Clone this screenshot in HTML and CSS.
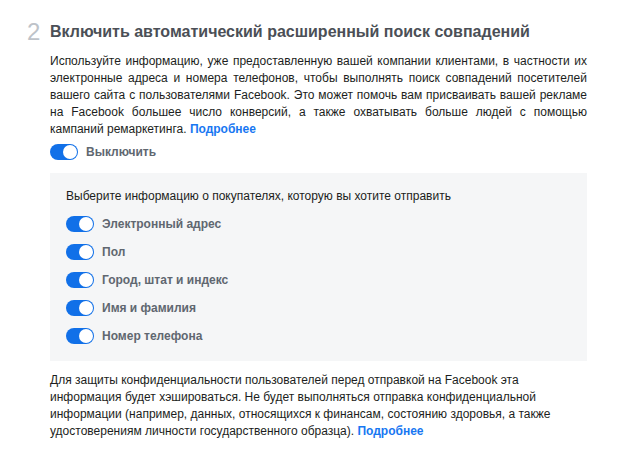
FILE: index.html
```html
<html>
<head>
<link rel="stylesheet" href="styles.css">
</head>
<body>
<div class="step">
  <div class="step-head">
    <span class="step-num">2</span>
    <h2 class="step-title">Включить автоматический расширенный поиск совпадений</h2>
  </div>

  <div class="step-body">
    <p class="intro">Используйте информацию, уже предоставленную вашей компании клиентами, в частности их электронные адреса и номера телефонов, чтобы выполнять поиск совпадений посетителей вашего сайта с пользователями Facebook. Это может помочь вам присваивать вашей рекламе на Facebook большее число конверсий, а также охватывать больше людей с помощью кампаний ремаркетинга. <a class="more" href="#">Подробнее</a></p>

    <div class="switch-row main-switch">
      <span class="toggle"><span class="knob"></span></span>
      <span class="switch-label">Выключить</span>
    </div>

    <div class="options">
      <div class="options-title">Выберите информацию о покупателях, которую вы хотите отправить</div>
      <div class="switch-row">
        <span class="toggle"><span class="knob"></span></span>
        <span class="switch-label">Электронный адрес</span>
      </div>
      <div class="switch-row">
        <span class="toggle"><span class="knob"></span></span>
        <span class="switch-label">Пол</span>
      </div>
      <div class="switch-row">
        <span class="toggle"><span class="knob"></span></span>
        <span class="switch-label">Город, штат и индекс</span>
      </div>
      <div class="switch-row">
        <span class="toggle"><span class="knob"></span></span>
        <span class="switch-label">Имя и фамилия</span>
      </div>
      <div class="switch-row">
        <span class="toggle"><span class="knob"></span></span>
        <span class="switch-label">Номер телефона</span>
      </div>
    </div>

    <p class="note">Для защиты конфиденциальности пользователей перед отправкой на Facebook эта информация будет хэшироваться. Не будет выполняться отправка конфиденциальной информации (например, данных, относящихся к финансам, состоянию здоровья, а также удостоверениям личности государственного образца). <a class="more" href="#">Подробнее</a></p>
  </div>
</div>
</body>
</html>
```

FILE: styles.css
```css
body {
  margin: 0;
  background: #ffffff;
  font-family: "Liberation Sans", Arial, sans-serif;
  color: #1c1e21;
}

.step {
  padding: 20px 0 0 27px;
}

.step-head {
  display: flex;
  align-items: center;
  height: 24px;
}

.step-num {
  width: 23px;
  font-size: 24px;
  font-weight: 300;
  color: #bec3c9;
  line-height: 24px;
}

.step-title {
  margin: 0;
  font-size: 16px;
  font-weight: bold;
  color: #4b4f56;
  line-height: 20px;
}

.step-body {
  margin: 0 0 0 23px;
  width: 537px;
}

.intro {
  margin: 9px 0 0;
  font-size: 12px;
  line-height: 17px;
  text-align: justify;
}

.note {
  margin: 11px 0 0;
  font-size: 12px;
  line-height: 17px;
}

.more {
  color: #1877f2;
  font-weight: bold;
  text-decoration: none;
}

.switch-row {
  display: flex;
  align-items: center;
  gap: 8px;
  height: 16px;
}

.main-switch {
  margin-top: 6px;
}

.toggle {
  display: flex;
  justify-content: flex-end;
  align-items: center;
  box-sizing: border-box;
  width: 28px;
  height: 16px;
  padding: 1px;
  border-radius: 8px;
  background: #1170e8;
}

.knob {
  width: 14px;
  height: 14px;
  border-radius: 50%;
  background: #ffffff;
}

.switch-label {
  font-size: 12px;
  font-weight: bold;
  color: #606770;
}

.options {
  display: flex;
  flex-direction: column;
  gap: 12px;
  margin-top: 13px;
  padding: 15px 16px 17px;
  background: #f5f6f7;
}

.options-title {
  font-size: 12px;
  line-height: 17px;
  margin-bottom: -1px;
}
```
